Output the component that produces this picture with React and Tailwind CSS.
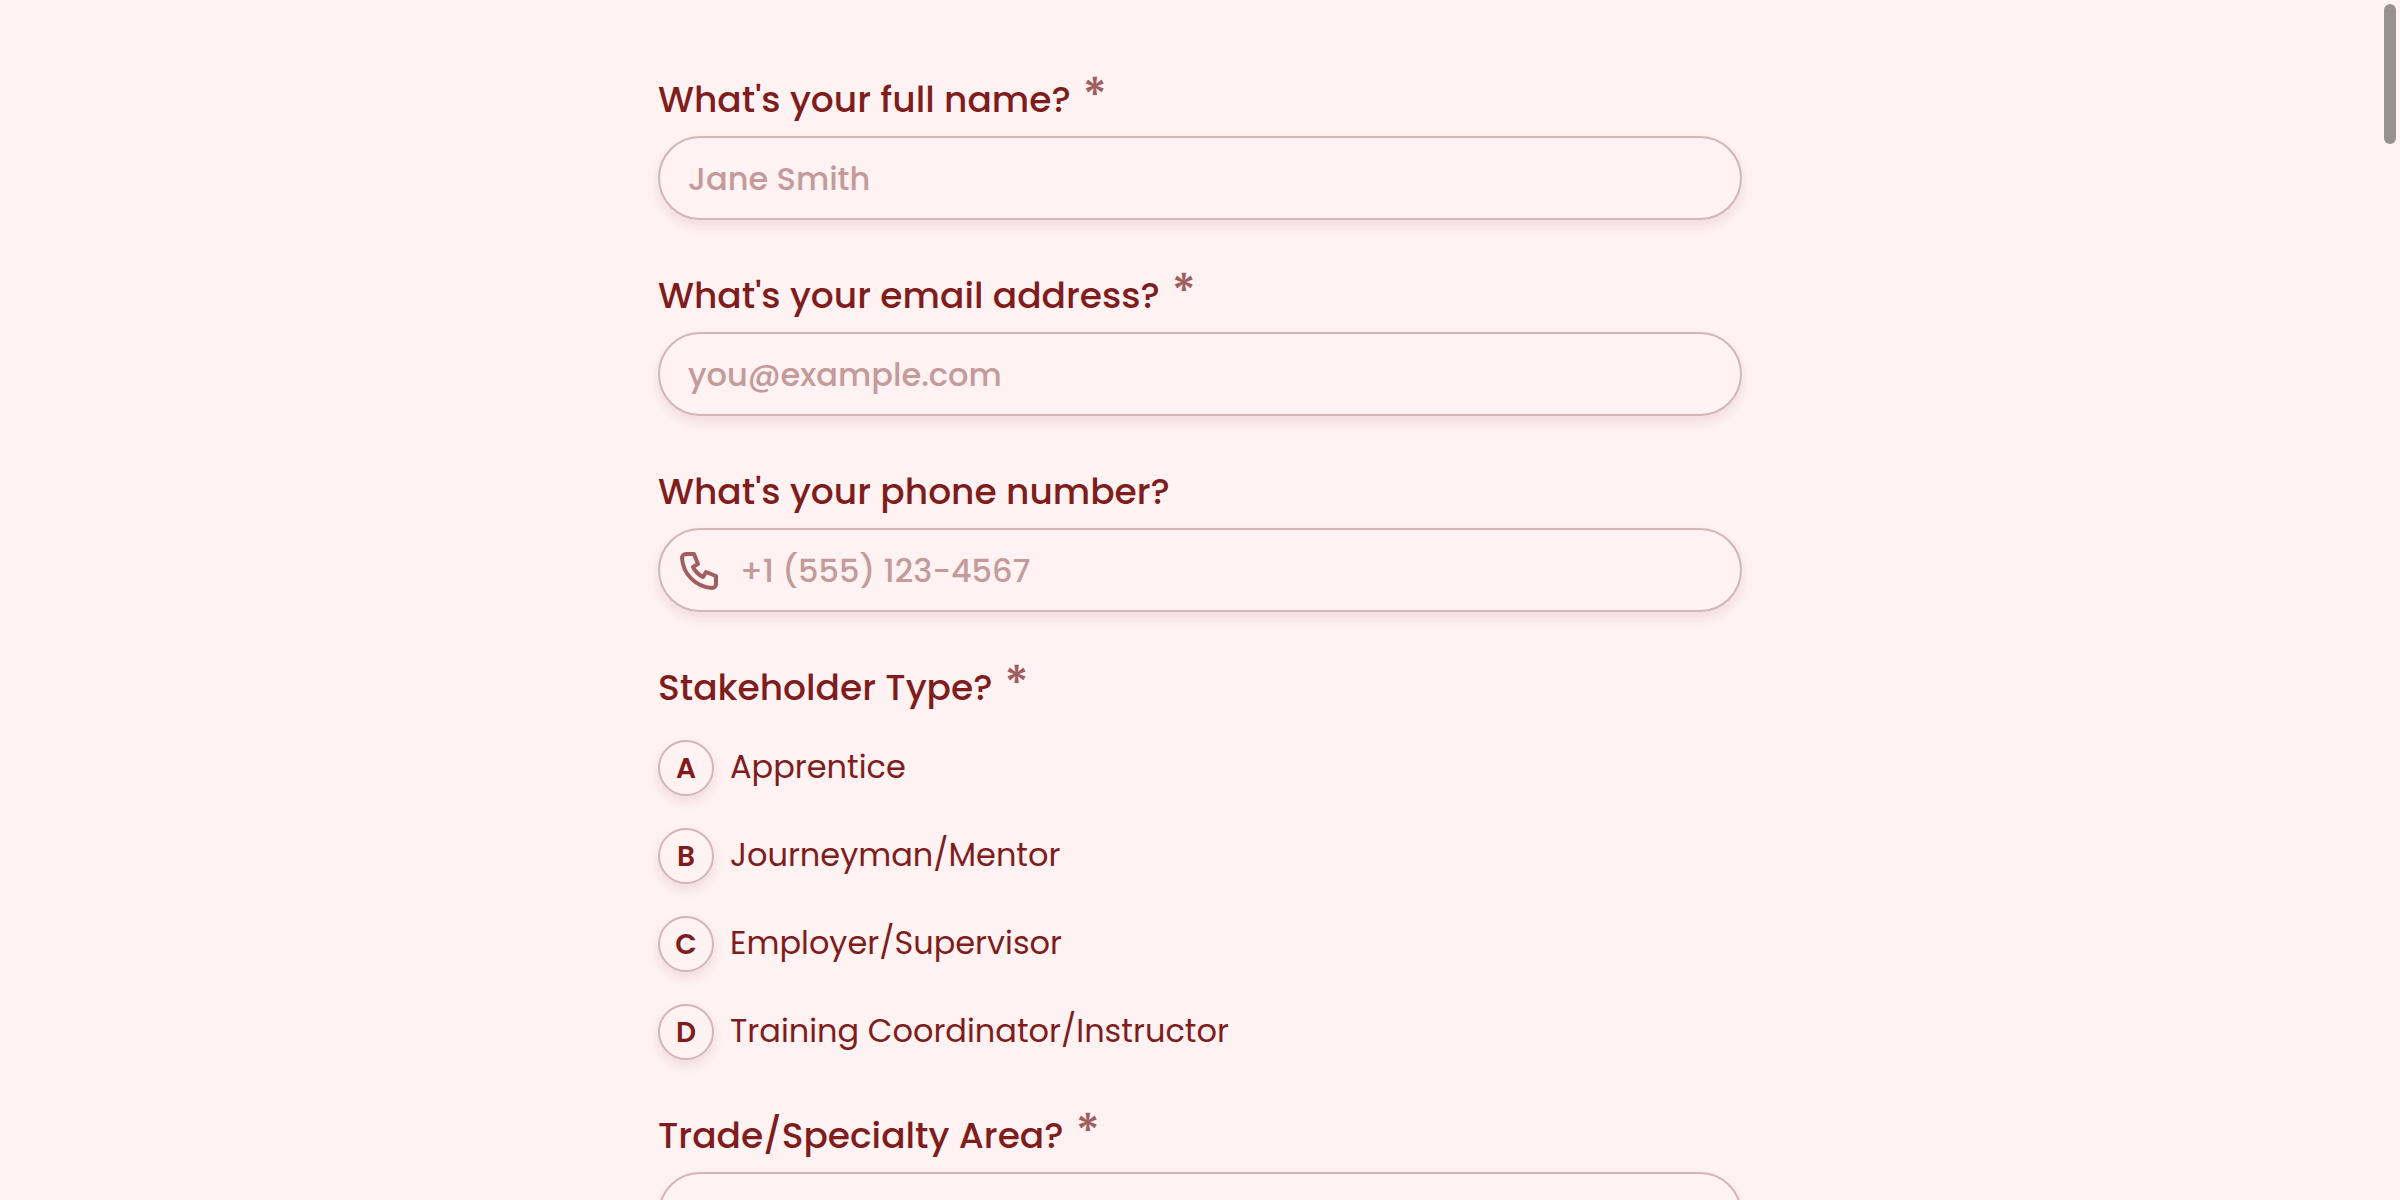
import { TbPhone } from 'react-icons/tb';

const STAKEHOLDER_TYPES = [
  'Apprentice',
  'Journeyman/Mentor',
  'Employer/Supervisor',
  'Training Coordinator/Instructor'
];

function Required() {
  return (
    <span className="ml-3 text-5xl/10 text-[#a15e5f]" aria-label="required">*</span>
  );
}

function TextField({ id, label, type = 'text', placeholder, required, icon: Icon }) {
  return (
    <div className="flex flex-col gap-2">
      <label htmlFor={id} className="text-4xl/14 font-medium">
        {label}
        {required && <Required />}
      </label>
      <div className="flex h-21 items-center rounded-full border-2 border-[#d4b5b7] shadow-[0_6px_12px_rgba(127,29,29,0.1)] focus-within:border-[#a15e5f]">
        {Icon && <Icon className="ml-4 size-12 shrink-0 text-[#a15e5f]" />}
        <input
          id={id}
          name={id}
          type={type}
          placeholder={placeholder}
          required={required}
          className={`h-full min-w-0 flex-1 bg-transparent pt-0.5 pr-7 text-[32px] font-medium outline-none placeholder:text-[#c59a9b] ${Icon ? 'pl-4' : 'pl-7'}`}
        />
      </div>
    </div>
  );
}

function ChoiceField({ name, label, options, required }) {
  return (
    <fieldset>
      <legend className="mb-6 text-4xl/14 font-medium">
        {label}
        {required && <Required />}
      </legend>
      <div className="flex flex-col gap-8">
        {options.map((option, index) => (
          <label key={option} className="flex cursor-pointer items-start gap-4">
            <input type="radio" name={name} value={option} className="peer sr-only" />
            <span className="flex size-14 shrink-0 items-center justify-center rounded-full border-2 border-[#d4b5b7] pt-0.5 text-[28px] font-semibold shadow-[0_6px_12px_rgba(127,29,29,0.1)] peer-checked:bg-[#f5dcdc]">
              {String.fromCharCode(65 + index)}
            </span>
            <span className="text-[32px]/[54px]">{option}</span>
          </label>
        ))}
      </div>
    </fieldset>
  );
}

export default function App() {
  return (
    <div className="h-screen overflow-y-auto bg-red-50 font-['Poppins','Inter',sans-serif] text-[#7f1d1d] [scrollbar-width:none]">
      <form className="mx-auto flex max-w-[1084px] flex-col gap-12 py-18">
        <TextField id="name" label="What's your full name?" placeholder="Jane Smith" required />
        <TextField id="email" type="email" label="What's your email address?" placeholder="you@example.com" required />
        <TextField id="phone" type="tel" label="What's your phone number?" placeholder="+1 (555) 123-4567" icon={TbPhone} />
        <ChoiceField name="stakeholder" label="Stakeholder Type?" options={STAKEHOLDER_TYPES} required />
        <TextField id="trade" label="Trade/Specialty Area?" required />
      </form>

      {/* Scroll thumb */}
      <div className="fixed top-1 right-1 h-35 w-3 rounded-full bg-[#989191]" />
    </div>
  );
}
